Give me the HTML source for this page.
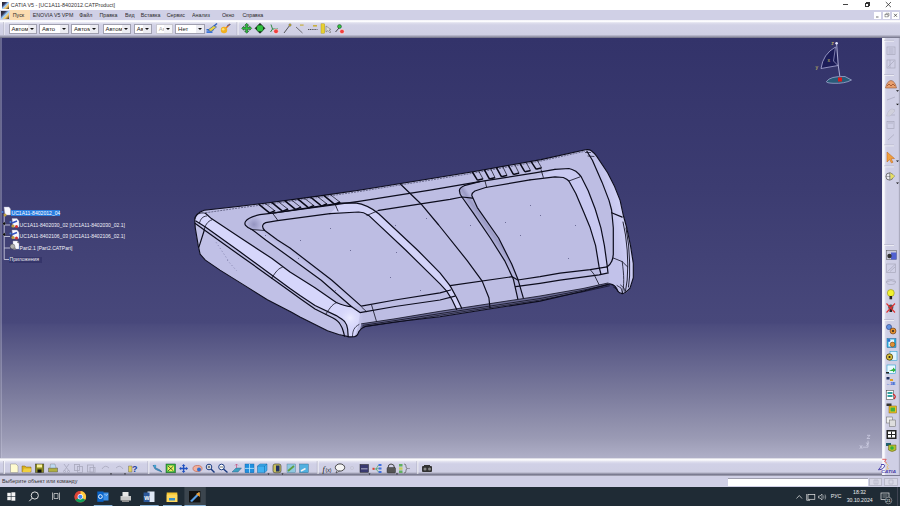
<!DOCTYPE html>
<html><head><meta charset="utf-8">
<style>
*{margin:0;padding:0;box-sizing:border-box}
html,body{width:900px;height:506px;overflow:hidden;background:#fff;font-family:"Liberation Sans",sans-serif;}
.a{position:absolute}
#title{left:0;top:0;width:900px;height:10px;background:#fff}
#menu{left:0;top:10px;width:900px;height:9.5px;background:#d0d0e6}
#tb{left:0;top:19.5px;width:900px;height:18px;background:linear-gradient(#f4f4f8 0,#fcfcfe 1.5px,#e0e0ee 2.8px,#d2d2e6 5px,#cfcfe4 14.5px,#a8a8bc 16px,#84849a 17.3px,#6a6a80 18px)}
#vp{left:0;top:37.5px;width:882px;height:420.5px;background:linear-gradient(#33336a 0px,#3c3c71 150px,#48487b 285px,#4c4c7e 287px,#7a7a9c 355px,#9a9ab4 400px,#b0b0c8 420.5px)}
#rtb{left:882px;top:37.5px;width:18px;height:438px;background:linear-gradient(90deg,#e8e8f2 0,#fcfcfe 1px,#f4f4fa 2.3px,#d8d8ea 3.5px,#cfcfe5 5px,#cfcfe5 16.3px,#b4b4c8 17.2px,#9c9cb0 18px);border-bottom:1px solid #7a7a90}
#btb{left:0;top:458px;width:882px;height:17.5px;background:linear-gradient(#c0c0d0 0,#fcfcfe 1px,#fafafc 2px,#dedeee 3.8px,#d0d0e6 6px,#cfcfe4 14px,#9c9cb0 15.5px,#727288 16.8px,#9a9aac 17.5px)}
#status{left:0;top:475.5px;width:900px;height:11.5px;background:#d0d0e6}
#task{left:0;top:487px;width:900px;height:19px;background:#1f2b35}
.t{position:absolute;white-space:nowrap;line-height:1;color:#222}
.combo{position:absolute;top:23.5px;height:10.5px;background:#fff;border:1px solid #a0a0b0;}
.combo span{position:absolute;left:1.8px;top:1.6px;font-size:6px;color:#222;line-height:1}
.combo i{position:absolute;right:0;top:0;width:8px;height:8.5px;background:#ececf2;}
.combo i:after{content:"";position:absolute;left:2px;top:3.5px;border-left:2px solid transparent;border-right:2px solid transparent;border-top:2.2px solid #111}
.mt{position:absolute;top:12.4px;font-size:5.3px;transform:scaleY(1.18);transform-origin:0 0;color:#2a2a2a;line-height:1;white-space:nowrap}
svg{position:absolute;left:0;top:0;overflow:visible}
</style></head><body>
<div id="title" class="a"></div>
<div id="menu" class="a"></div>
<div id="tb" class="a"></div>
<div id="vp" class="a"></div>
<div id="rtb" class="a"></div>
<div id="btb" class="a"></div>
<div id="status" class="a"></div>
<div id="task" class="a"></div>
<div class="a" style="left:0;top:37.5px;width:1px;height:420.5px;background:#9090a8;opacity:0.55"></div>
<div class="a" style="left:1px;top:37.5px;width:0.6px;height:420.5px;background:#c8c8dc;opacity:0.35"></div>
<svg width="900" height="40"><line x1="3.5" y1="22" x2="3.5" y2="35" stroke="#aaaabc" stroke-width="0.7"/><line x1="4.2" y1="22" x2="4.2" y2="35" stroke="#fff" stroke-width="0.6"/></svg>
<!-- HOOD -->
<svg width="900" height="506">
<defs>
<linearGradient id="gband" gradientUnits="userSpaceOnUse" x1="220" y1="250" x2="210" y2="265"><stop offset="0" stop-color="#d6d6fb"/><stop offset="1" stop-color="#c6c6ee"/></linearGradient>
<radialGradient id="gcorner" cx="350" cy="318" r="14" gradientUnits="userSpaceOnUse"><stop offset="0" stop-color="#ececff"/><stop offset="1" stop-color="#d0d0f6" stop-opacity="0"/></radialGradient>
<linearGradient id="gsh1" gradientUnits="userSpaceOnUse" x1="290" y1="257.5" x2="295.5" y2="250"><stop offset="0" stop-color="#c6c6ec"/><stop offset="0.5" stop-color="#bdbde5"/><stop offset="1" stop-color="#b0b0da"/></linearGradient>
<linearGradient id="gsh2" gradientUnits="userSpaceOnUse" x1="490" y1="238" x2="497" y2="233.2"><stop offset="0" stop-color="#b4b4dc"/><stop offset="0.55" stop-color="#9a9ac4"/><stop offset="1" stop-color="#b8b8e0"/></linearGradient>
<linearGradient id="gredge" gradientUnits="userSpaceOnUse" x1="612" y1="235" x2="632" y2="231"><stop offset="0" stop-color="#c2c2ea"/><stop offset="0.7" stop-color="#d0d0f6"/><stop offset="1" stop-color="#bcbce4"/></linearGradient>
</defs>
<path d="M194.7,219.8 C195,215.5 197.5,212.5 204.2,210.3 L240,206.2 L265,203.2 L320,195.9 L359,190.2 L430,178.8 L473,171.8 L541,159.6 L585.5,149.8 C588,149.5 590,149.8 591,150.5 C593,152 595,154 596.6,156.1 L607.6,172.7 L614.6,186.6 L620.1,200.4 L623.2,215 L626.8,228 L630.5,245.6 L633.3,263.3 L633.3,277.6 L630,288.2 C627,291.5 625,293.8 622.2,293.6 C620,293.2 618.6,292.5 617.8,291.3 L615.1,286.4 C613,284.6 611.5,284 609.8,283.8 L583,291.2 L540,301.1 L440,316.7 L395,322 L365.3,326.4 C361,328 359.8,330 358.9,331.5 C357.8,335 356.5,336.4 354.5,336.6 L349.4,336.9 L338.7,334.5 L327.5,330.7 L300,316.9 L291.1,312.1 L267.4,299.7 L243.7,284.9 L220,270.1 L205.4,260.1 L200.1,254.2 L198.3,245.9 L195.3,228.1 Z" fill="#bdbde3"/>
<!-- side face -->
<path d="M195.3,223.4 L240,255.4 L290,291.2 L300,298.5 L315,309 L333,318 C336.5,320 339,322 340,324 C342,327 343,330 343.5,332 L344.5,336.2 L338.7,334.5 L327.5,330.7 L300,316.9 L291.1,312.1 L267.4,299.7 L243.7,284.9 L220,270.1 L205.4,260.1 L200.1,254.2 L198.3,245.9 L195.3,228.1 Z" fill="#c0c0e6"/>
<!-- band L1-L2 -->
<path d="M205.4,213.3 L211.4,218.6 L240,237.6 L272,258.5 L290,272 L315,287.7 L336.3,302.5 C342,305 346,306.5 351.7,306.7 L360,312.6 C359,320 358,330 354.5,336.6 L348.2,336.6 L347.6,329 C347.5,327 346.5,324 344.6,321.5 C343,320 340,318 336.3,315.6 L315,305.5 L300,295.6 L290,288.6 L240,251.8 L205.4,226.9 L195.9,221 C196,216 199,213 205.4,213.3 Z" fill="url(#gband)"/>
<path d="M336,303 L352,306.7 L362,313 L365,325 L359,332 L354.5,336.6 L347,336 L345,322 Z" fill="url(#gcorner)"/>
<!-- left recess left wall shadow -->
<path d="M251.9,229.5 L265.7,240 L290,257.5 L320.9,280 L351.7,306.7 L361.2,306.1 L331.6,280 L290,248 L277.5,240 L264.7,230.5 Z" fill="url(#gsh1)"/>
<radialGradient id="gcl" cx="254" cy="224.5" r="9" gradientUnits="userSpaceOnUse"><stop offset="0" stop-color="#9494c0"/><stop offset="1" stop-color="#c0c0e6"/></radialGradient><path d="M247,219 C243.5,222 244,226 251.9,229.5 L264.7,230.5 C261.5,227.5 262,224 265.7,222.6 L272.6,213.2 L259.8,214.7 Z" fill="url(#gcl)"/>
<!-- left recess right wall highlight -->
<path d="M340,203.1 L355.2,202.8 C364,204 372,208 378.7,213.7 L417.4,250 L440,272.8 L450,285.6 L456.7,297.8 L461.7,308.3 L456.7,309.4 L452.2,300 L446.7,291.1 L440,283.9 L405.6,250 L368.7,215.4 C365,213 362,212 358.6,212 L330,213.7 Z" fill="#d2d2f8"/>
<!-- right recess left wall shadow -->
<path d="M479.6,181.6 L464.2,185.7 C460.5,187.5 459,189 459.5,191 C459.5,193.5 460.5,195.5 461.9,197 L473.7,213.6 L490.3,238 L504.6,260.6 L513.3,278.9 L517.8,298.9 L523.3,297.8 L517.8,278.9 L511.7,264.1 L498.6,238 L477.3,207.6 L471.9,195.8 C471.5,194 472.5,192.5 474.9,191 L485.6,187.5 Z" fill="url(#gsh2)"/>
<!-- right recess right wall highlight -->
<path d="M555,169.3 L568.9,168.5 C571.5,169 573.5,170 575.8,171.3 C578,173 579.8,174.8 581.3,176.9 L588.2,190.7 L595.2,209 L600.9,227.8 L604.4,245.6 L607.1,265.1 L608,273.1 L600.9,274 L599.1,266.9 L595.6,245.6 L590.2,227.8 L584.1,213 L575.8,193.5 L568.9,181 C567.5,179.5 565.5,178.5 563.3,177.5 L555,176.9 L530,179.8 Z" fill="#c9c9f1"/>
<!-- right rolled edge -->
<path d="M586.9,151.2 L592.4,160.2 L602.1,182.4 L609,200.4 L611.6,210 L613.3,227.8 L613.3,254.4 C613,258 612.5,260 611.6,261.6 C610.5,264 609,266 607.1,266.9 L608,273.1 L609.8,283.8 C611.5,284 613,284.6 615.1,286.4 L617.8,291.3 C618.6,292.5 620,293.2 622.2,293.6 C625,293.8 627.5,291.5 630,288.2 L633.3,277.6 L633.3,263.3 L630.5,245.6 L626.8,228 L623.2,215 L620.1,200.4 L614.6,186.6 L607.6,172.7 L596.6,156.1 C595,154 593,152 591,150.5 Z" fill="url(#gredge)"/>
<!-- lip band -->
<path d="M359.5,331 L361.5,323.8 L395,318.8 L440,311.3 L540,296 L583,288.5 L608,283 L609.8,283.8 L583,291.2 L540,301.1 L440,316.7 L395,322 L365.3,326.4 Z" fill="#6a6a94"/>
<g fill="none" stroke="#0c0c1c" stroke-width="1.2" stroke-linejoin="round" stroke-linecap="round">
<path d="M194.7,219.8 C195,215.5 197.5,212.5 204.2,210.3 L240,206.2 L265,203.2 L320,195.9 L359,190.2 L430,178.8 L473,171.8 L541,159.6 L585.5,149.8 C588,149.5 590,149.8 591,150.5 C593,152 595,154 596.6,156.1 L607.6,172.7 L614.6,186.6 L620.1,200.4 L623.2,215 L626.8,228 L630.5,245.6 L633.3,263.3 L633.3,277.6 L630,288.2 C627,291.5 625,293.8 622.2,293.6 C620,293.2 618.6,292.5 617.8,291.3 L615.1,286.4 C613,284.6 611.5,284 609.8,283.8 L583,291.2 L540,301.1 L440,316.7 L395,322 L365.3,326.4 C361,328 359.8,330 358.9,331.5 C357.8,335 356.5,336.4 354.5,336.6 L349.4,336.9 L338.7,334.5 L327.5,330.7 L300,316.9 L291.1,312.1 L267.4,299.7 L243.7,284.9 L220,270.1 L205.4,260.1 L200.1,254.2 L198.3,245.9 L195.3,228.1 Z" stroke-width="1.1"/>
<path d="M205.4,213.3 L211.4,218.6 L240,237.6 L272,258.5 L290,272 L315,287.7 L336.3,302.5 C342,305 346,306.5 351.7,306.7"/><path d="M195.9,221 L205.4,226.9 L240,251.8 L290,288.6 L300,295.6 L315,305.5 L336.3,315.6 C340,318 343,320 344.6,321.5 C346.5,324 347.5,327 347.6,329 L348.2,336.6"/><path d="M195.3,223.4 L240,255.4 L290,291.2 L300,298.5 L315,309 L333,318 C336.5,320 339,322 340,324 C342,327 343,330 343.5,332 L344.5,336.2"/>
<path d="M204.2,230.5 L198.9,247.1"/>
<path d="M194.9,218.5 C196,214 200,211.8 205.4,213.3" stroke-width="0.8"/>
<path d="M199.5,223 C200.5,219 202.5,216.3 206.5,216" stroke-width="0.8"/>
<path d="M204.2,230.5 C204.5,226 207.5,221 211.9,219.8" stroke-width="0.8"/>
<path d="M282.2,267.4 C279,268 276,271 271.5,278.6" stroke-width="0.8"/>
<path d="M336.9,302.5 C333,304 331,306 325.7,314.4" stroke-width="0.8"/>
<path d="M340,203.1 L272.6,213.2 L259.8,214.7 C252,216.5 248,218 245.5,221.5 C244,224 245,226.5 251.9,229.5 L265.7,240 L290,257.5 L320.9,280 L351.7,306.7 L360,312.6 L395,306.5 L440,300 L455,296.1"/><path d="M330,213.7 L277.5,220.6 L265.7,222.6 C262,224 261.5,227 264.7,230.5 L277.5,240 L290,248 L331.6,280 L361.2,306.1 L395,300 L440,292.8 L450.6,290"/>
<path d="M250.9,229.5 L264.7,230.5" stroke-width="0.8"/>
<path d="M272.6,213.2 L278,220.6" stroke-width="0.8"/>
<path d="M330,213.7 L358.6,212 C362,212 365,213 368.7,215.4 L405.6,250 L440,283.9 L446.7,291.1 L452.2,300 L456.7,309.4"/><path d="M340,203.1 L355.2,202.8 C364,204 372,208 378.7,213.7 L417.4,250 L440,272.8 L450,285.6 L456.7,297.8 L461.7,308.3"/>
<path d="M367,215.4 L378.7,210.4" stroke-width="0.8"/>
<path d="M361.8,307.3 L366.7,311.8" stroke-width="0.8"/>
<path d="M371.6,305.1 L376.4,321.1" stroke-width="0.8"/>
<path d="M272.6,213.2 L359,201.4 L430,190.2 L479.6,181.6 L535,172.8 L555,169.3"/><path d="M378.7,210.4 L450,199.3 L461.9,197 L472.5,198.1"/><path d="M400.6,184.3 L420.8,203.7 L438.7,225 L467.2,260.6 L482.2,281.1 L488.9,297.8 L490,308"/>
<path d="M479.6,181.6 L464.2,185.7 C460.5,187.5 459,189 459.5,191 C459.5,193.5 460.5,195.5 461.9,197 L473.7,213.6 L490.3,238 L504.6,260.6 L513.3,278.9 L517.8,298.9"/><path d="M530,179.8 L485.6,187.5 L474.9,191 C472.5,192.5 471.5,194 471.9,195.8 L477.3,207.6 L498.6,238 L511.7,264.1 L517.8,278.9 L523.3,297.8"/>
<path d="M485,181 L486.7,187.5" stroke-width="0.8"/>
<path d="M555,169.3 L568.9,168.5 C571.5,169 573.5,170 575.8,171.3 C578,173 579.8,174.8 581.3,176.9 L588.2,190.7 L595.2,209 L600.9,227.8 L604.4,245.6 L607.1,265.1 L608,273.1"/><path d="M530,179.8 L555,176.9 L563.3,177.5 C565.5,178.5 567.5,179.5 568.9,181 L575.8,193.5 L584.1,213 L590.2,227.8 L595.6,245.6 L599.1,266.9 L600.9,274"/>
<path d="M568.9,181 L580,176.9" stroke-width="0.8"/>
<path d="M450,285.6 L512.2,276.7 L517.8,280 L540,276.7 L560,273.1 L590.2,269.6 L607.1,266.9"/><path d="M515.6,286.7 L540,283.3 L560,280.2 L599.1,274.9 L607.1,273.1"/>
<path d="M590.2,269.6 L593.8,274 L599.1,284.7" stroke-width="0.8"/>
<path d="M586.9,151.2 L592.4,160.2 L602.1,182.4 L609,200.4 L611.6,210 L613.3,227.8 L613.3,254.4 C613,258 612.5,260 611.6,261.6 C610.5,264 609,266 607.1,266.9"/><path d="M611.6,212.7 L622.2,217.1"/><path d="M613.3,258 L622.2,261.6 L627.6,266.9" stroke-width="0.8"/><path d="M622.2,261.6 C624,275 624.5,285 622.2,293.6" stroke-width="0.8"/>
<path d="M585.5,152.5 L590.5,152.5 M588,156 L594,156.5" stroke-width="0.7"/>
<path d="M361.5,323.8 L395,318.8 L440,311.3 L540,296 L583,288.5 L608,283" stroke-width="0.8"/><path d="M363,325.3 L395,320.6 L440,313.6 L540,298.5 L583,290.2 L609,284.6" stroke-width="0.8"/>
<path d="M623,222 L625.5,235 L627.2,250 L627.8,265 L627.2,280 L625.5,291" stroke-width="0.9"/>
<path d="M626,228 L628.6,245 L629.6,262 L629.6,276 L628.5,287" stroke-width="0.9"/>
<path d="M613.5,287 L617,289.5 L619.5,293 M617,285.5 L621,288 L622.5,293.2 M620.5,285 L624,288 L625.2,292.5" stroke-width="0.7"/>
<path d="M362.5,327 L395,322.3 L440,315.2 L540,300 L583,291.8 L609.5,285.8" stroke-width="0.7"/>
<path d="M352.5,336.5 C352.5,331 354,327 359,324.5" stroke-width="0.7"/>
<path d="M617.8,291.3 C617,287 615,285 611,284.6" stroke-width="0.7"/>
</g>
<g fill="#5a5a86"><rect x="265" y="235" width="0.9" height="0.9"/><rect x="300" y="240" width="0.9" height="0.9"/><rect x="330" y="228" width="0.9" height="0.9"/><rect x="298" y="258" width="0.9" height="0.9"/><rect x="350" y="250" width="0.9" height="0.9"/><rect x="396" y="252" width="0.9" height="0.9"/><rect x="335" y="290" width="0.9" height="0.9"/><rect x="390" y="277" width="0.9" height="0.9"/><rect x="426" y="218" width="0.9" height="0.9"/><rect x="395" y="225" width="0.9" height="0.9"/><rect x="470" y="225" width="0.9" height="0.9"/><rect x="530" y="205" width="0.9" height="0.9"/><rect x="540" y="215" width="0.9" height="0.9"/><rect x="575" y="225" width="0.9" height="0.9"/><rect x="520" y="235" width="0.9" height="0.9"/><rect x="568" y="258" width="0.9" height="0.9"/><rect x="505" y="222" width="0.9" height="0.9"/><rect x="420" y="290" width="0.9" height="0.9"/></g>
<path d="M205.4,212.8 L240,207.8 L265,204.6 L320,197.3 L359,191.6 L430,180.2 L473,173.2 L541,161 L585,151.3" fill="none" stroke="#303050" stroke-width="0.6" stroke-dasharray="2 1"/>
<path d="M216.1,242.3 L228,260.1 M227.1,260 L236.6,270.7" stroke="#5a5a88" stroke-width="0.5" stroke-dasharray="1.2 2.2" fill="none"/>
</svg>
<!-- VENTS -->
<svg width="900" height="506"><g stroke="#0a0a18" stroke-linejoin="round" stroke-linecap="round" fill="none">
<path d="M259.0,204.4 L268.2,211.8 Q269.0,212.9 270.5,212.6 L274.5,210.9" stroke-width="1.5"/>
<path d="M265.5,203.5 L275.0,210.9" stroke-width="0.7"/>
<path d="M272.0,202.7 L281.2,210.1 Q282.0,211.2 283.5,210.9 L287.5,209.2" stroke-width="1.5"/>
<path d="M278.5,201.8 L288.0,209.2" stroke-width="0.7"/>
<path d="M285.0,200.9 L294.2,208.3 Q295.0,209.4 296.5,209.1 L300.5,207.4" stroke-width="1.5"/>
<path d="M291.5,200.0 L301.0,207.4" stroke-width="0.7"/>
<path d="M298.0,199.2 L307.2,206.6 Q308.0,207.7 309.5,207.4 L313.5,205.7" stroke-width="1.5"/>
<path d="M304.5,198.3 L314.0,205.7" stroke-width="0.7"/>
<path d="M311.0,197.5 L320.2,204.9 Q321.0,206.0 322.5,205.7 L326.5,204.0" stroke-width="1.5"/>
<path d="M317.5,196.6 L327.0,204.0" stroke-width="0.7"/>
<path d="M324.0,195.7 L333.2,203.1 Q334.0,204.2 335.5,203.9 L339.5,202.2" stroke-width="1.5"/>
<path d="M330.5,194.8 L340.0,202.2" stroke-width="0.7"/>
<path d="M472.7,172.5 L476.8,179.2 Q477.2,180.2 478.4,180.0 L482.5,179.1" stroke-width="1.5"/>
<path d="M478.9,171.4 L482.8,178.5" stroke-width="0.7"/>
<path d="M484.7,170.3 L488.8,177.9 Q489.2,178.9 490.4,178.7 L494.5,177.8" stroke-width="1.5"/>
<path d="M490.9,169.2 L494.8,177.2" stroke-width="0.7"/>
<path d="M496.7,168.1 L500.8,175.6 Q501.2,176.6 502.4,176.4 L506.5,175.5" stroke-width="1.5"/>
<path d="M502.9,167.0 L506.8,174.9" stroke-width="0.7"/>
<path d="M508.7,166.0 L512.8,173.4 Q513.2,174.4 514.4,174.2 L518.5,173.3" stroke-width="1.5"/>
<path d="M514.9,164.9 L518.8,172.7" stroke-width="0.7"/>
<path d="M520.2,163.9 L524.3,170.8 Q524.7,171.8 525.9,171.6 L530.0,170.7" stroke-width="1.5"/>
<path d="M526.4,162.8 L530.3,170.1" stroke-width="0.7"/>
<path d="M531.3,161.9 L535.4,168.1 Q535.8,169.1 537.0,168.9 L541.1,168.0" stroke-width="1.5"/>
<path d="M537.5,160.8 L541.4,167.4" stroke-width="0.7"/>
<path d="M335,204 L338,211" stroke-width="0.8"/>
<path d="M541.1,169.8 L543.3,177.3" stroke-width="0.8"/>
</g></svg>



<!-- title bar -->
<div class="a" style="left:1.5px;top:1.5px;width:7px;height:7px;background:linear-gradient(135deg,#222 0,#335 30%,#9cf 50%,#fc6 70%,#222 100%)"></div>
<div class="t" style="left:10.8px;top:2.3px;font-size:5.4px;transform:scaleY(1.15);transform-origin:0 0;color:#333">CATIA V5 - [UC1A11-8402012.CATProduct]</div>
<div class="a" style="left:843px;top:4.3px;width:5px;height:0.8px;background:#444"></div>
<div class="a" style="left:864.5px;top:3.2px;width:4px;height:4px;border:0.8px solid #333"></div>
<div class="a" style="left:865.5px;top:2.2px;width:4px;height:4px;border-top:0.8px solid #333;border-right:0.8px solid #333"></div>
<svg width="900" height="20"><path d="M885.8 2 L891 7.2 M891 2 L885.8 7.2" stroke="#333" stroke-width="0.8"/></svg>

<!-- menu -->
<div class="a" style="left:1px;top:11px;width:8px;height:8px;background:linear-gradient(135deg,#222 0,#335 30%,#9cf 50%,#fc6 70%,#222 100%)"></div>
<div class="a" style="left:10px;top:10px;width:19.5px;height:9.5px;background:#fbdcb0"></div>
<div class="mt" style="left:12.8px">Пуск</div>
<div class="mt" style="left:32.7px">ENOVIA V5 VPM</div>
<div class="mt" style="left:79.3px">Файл</div>
<div class="mt" style="left:99.5px">Правка</div>
<div class="mt" style="left:125px">Вид</div>
<div class="mt" style="left:140.8px">Вставка</div>
<div class="mt" style="left:166.7px">Сервис</div>
<div class="mt" style="left:192px">Анализ</div>
<div class="mt" style="left:222px">Окно</div>
<div class="mt" style="left:242.5px">Справка</div>
<div class="a" style="left:874px;top:12px;width:7px;height:6.5px;background:#fff"></div>
<div class="a" style="left:883px;top:12px;width:7px;height:6.5px;background:#fff"></div>
<div class="a" style="left:892px;top:12px;width:7px;height:6.5px;background:#fff"></div>

<svg width="900" height="30">
<path d="M876 17 L878.5 17" stroke="#333" stroke-width="0.7"/>
<rect x="885" y="14.3" width="3" height="2.6" fill="none" stroke="#555" stroke-width="0.5"/><path d="M886 14.3 L886 13.3 L889 13.3 L889 16 L888 16" fill="none" stroke="#555" stroke-width="0.5"/>
<path d="M894 13.8 L897 16.8 M897 13.8 L894 16.8" stroke="#333" stroke-width="0.7"/>
</svg>
<!-- combos -->
<div class="combo" style="left:8.7px;width:28.6px"><span>Автомс</span><i></i></div>
<div class="combo" style="left:39.3px;width:29.4px"><span>Авто</span><i></i></div>
<div class="combo" style="left:71.3px;width:28px"><span>Автомс</span><i></i></div>
<div class="combo" style="left:102.7px;width:28.6px"><span>Автомс</span><i></i></div>
<div class="combo" style="left:134px;width:18px"><span>Авт</span><i></i></div>
<div class="combo" style="left:156px;width:17px;border-color:#c8c8d0"><span style="color:#aaa">Авт</span><i style="background:#f4f4f8"></i></div>
<div class="combo" style="left:175.3px;width:29.4px"><span>Нет</span><i></i></div>

<!-- top toolbar icons -->
<svg width="900" height="40">
<line x1="237" y1="22" x2="237" y2="35" stroke="#b0b0c4" stroke-width="0.8"/>
<line x1="238" y1="22" x2="238" y2="35" stroke="#fff" stroke-width="0.8"/>
<!-- brush -->
<rect x="206.5" y="29" width="7" height="1.6" fill="#2a6ad8"/><rect x="206.5" y="31.3" width="6" height="1.6" fill="#2a6ad8"/>
<path d="M208 30 L214 25.5 L216.5 27 L211 31.5 Z" fill="#e8d040" stroke="#2050b0" stroke-width="0.6"/>
<line x1="214" y1="26" x2="217" y2="23.5" stroke="#3060c0" stroke-width="1.5"/>
<!-- ball -->
<line x1="225" y1="29" x2="230" y2="24" stroke="#e07020" stroke-width="1.5"/><line x1="227" y1="25.5" x2="230.5" y2="24.5" stroke="#3060c0" stroke-width="0.8"/>
<circle cx="224" cy="30" r="3.2" fill="#f0b020"/><circle cx="223.2" cy="29.2" r="1.3" fill="#ffe070"/>
<!-- green 4-way -->
<g transform="translate(246.7,28.3)" fill="#30c040" stroke="#0a3010" stroke-width="0.5">
<path d="M0 -5 L2 -3 L1 -3 L1 -1 L3 -1 L3 -2 L5 0 L3 2 L3 1 L1 1 L1 3 L2 3 L0 5 L-2 3 L-1 3 L-1 1 L-3 1 L-3 2 L-5 0 L-3 -2 L-3 -1 L-1 -1 L-1 -3 L-2 -3 Z"/>
</g>
<g transform="translate(260,28.3)" stroke="#0a3010" stroke-width="0.5">
<circle r="3.6" fill="#30c040"/>
<path d="M0 -5 L1.5 -3.5 L-1.5 -3.5 Z M0 5 L1.5 3.5 L-1.5 3.5 Z M-5 0 L-3.5 1.5 L-3.5 -1.5 Z M5 0 L3.5 1.5 L3.5 -1.5 Z" fill="#111"/>
</g>
<!-- axis red -->
<path d="M271 24.5 L272.5 29 L278 29 M272.5 29 L270.5 32" stroke="#208030" stroke-width="0.9" fill="none"/>
<circle cx="276" cy="31.3" r="2.4" fill="#f04040" stroke="#fff" stroke-width="0.5"/>
<!-- pin -->
<line x1="284" y1="33" x2="290" y2="25" stroke="#333" stroke-width="0.8"/><circle cx="290" cy="25" r="1.2" fill="#d8c030" stroke="#444" stroke-width="0.4"/>
<!-- line -->
<line x1="296" y1="27" x2="302.5" y2="33" stroke="#444" stroke-width="0.7"/><rect x="300" y="24.5" width="3.6" height="1.2" fill="#c8b040"/>
<!-- dim -->
<line x1="308" y1="29.5" x2="317.5" y2="29.5" stroke="#333" stroke-width="0.8" stroke-dasharray="1.2 0.6"/><rect x="313" y="25" width="4" height="1.6" fill="#c8b040"/>
<!-- yellow bar -->
<rect x="321" y="23.8" width="3.8" height="9.4" fill="#e8d030" stroke="#a09020" stroke-width="0.4"/><path d="M326 26 L326 32 L328 30.5 L330 33 L331 32 L329 30 L331 29.5 Z" fill="#ddd" stroke="#444" stroke-width="0.4"/>
<!-- green pin red -->
<line x1="335.5" y1="32" x2="339" y2="28" stroke="#222" stroke-width="0.8"/><circle cx="339.5" cy="26.5" r="2" fill="#30c040" stroke="#222" stroke-width="0.4"/>
<circle cx="342" cy="31.5" r="2.3" fill="#f04040" stroke="#fff" stroke-width="0.5"/>
</svg>

<!-- bottom toolbar icons -->
<svg width="900" height="506">
<g stroke-width="0.8">
<line x1="3.5" y1="461" x2="3.5" y2="474" stroke="#aaaabc"/><line x1="4.3" y1="461" x2="4.3" y2="474" stroke="#fff"/>
<line x1="148" y1="461" x2="148" y2="474" stroke="#aaaabc"/><line x1="148.8" y1="461" x2="148.8" y2="474" stroke="#fff"/>
<line x1="317.3" y1="461" x2="317.3" y2="474" stroke="#aaaabc"/><line x1="318.1" y1="461" x2="318.1" y2="474" stroke="#fff"/>
<line x1="417" y1="461" x2="417" y2="474" stroke="#aaaabc"/><line x1="417.8" y1="461" x2="417.8" y2="474" stroke="#fff"/>
</g>
<!-- new -->
<path d="M10.5 464 L16 464 L18 466 L18 472.5 L10.5 472.5 Z" fill="#fffbd0" stroke="#888" stroke-width="0.5"/>
<!-- open -->
<path d="M22 466 L25 466 L26 467 L31 467 L31 472 L22 472 Z" fill="#d8b020" stroke="#806010" stroke-width="0.5"/>
<path d="M22.5 472 L24 468.5 L31.5 468.5 L30.5 472 Z" fill="#f0d040"/>
<!-- save -->
<rect x="35.3" y="464" width="8.5" height="8.5" fill="#8a8a20" stroke="#333" stroke-width="0.5"/><rect x="37" y="464.5" width="5" height="3" fill="#f8f0a0"/><rect x="37.5" y="469.5" width="4" height="3" fill="#111"/>
<!-- print -->
<path d="M48.5 468 L57.5 468 L57.5 472 L48.5 472 Z" fill="#b0b040" stroke="#555" stroke-width="0.5"/><path d="M50.5 464 L55 464 L56 468 L50 468 Z" fill="#bcd8f0" stroke="#777" stroke-width="0.4"/>
<!-- greys -->
<g stroke="#a8a8bc" stroke-width="0.8" fill="none">
<path d="M64 464 L69 471 M69 464 L64 471"/><circle cx="64.5" cy="471.5" r="1"/><circle cx="68.5" cy="471.5" r="1"/>
<rect x="74.5" y="464.5" width="5" height="6"/><rect x="77.5" y="466.5" width="5" height="6"/>
<rect x="87.5" y="465" width="6" height="7"/><rect x="90" y="467.5" width="5" height="5"/>
<path d="M102 469 Q105 464 109 468"/><path d="M116 468 Q120 464 123 469"/>
</g>
<path d="M110 473.5 L112 473.5 L111 474.8 Z M124 473.5 L126 473.5 L125 474.8 Z" fill="#111"/>
<!-- help -->
<path d="M128.5 466 L132 466 L132 472 L128.5 472 Z" fill="#e0d060" stroke="#555" stroke-width="0.4"/>
<text x="132" y="472" font-size="9" font-weight="bold" fill="#2040a0" font-family="Liberation Sans">?</text>
<!-- fly -->
<path d="M153 465 L156 468 L160 470 L162 472 L158 470.5 L155 469 Z" fill="#40a0d0" stroke="#205080" stroke-width="0.5"/><circle cx="155" cy="466" r="1.3" fill="#40a0d0"/>
<!-- fit all -->
<rect x="166" y="464" width="9.5" height="8.8" fill="#30b040" stroke="#1a5020" stroke-width="0.5"/><rect x="167.5" y="465.5" width="6.5" height="5.8" fill="#f0f060"/>
<path d="M168 466 L173.5 471 M173.5 466 L168 471" stroke="#1a5020" stroke-width="0.8"/>
<!-- pan -->
<g transform="translate(183.6,468.5)" fill="#2050c0"><path d="M0 -4.5 L1.8 -2.5 L0.7 -2.5 L0.7 -0.7 L2.5 -0.7 L2.5 -1.8 L4.5 0 L2.5 1.8 L2.5 0.7 L0.7 0.7 L0.7 2.5 L1.8 2.5 L0 4.5 L-1.8 2.5 L-0.7 2.5 L-0.7 0.7 L-2.5 0.7 L-2.5 1.8 L-4.5 0 L-2.5 -1.8 L-2.5 -0.7 L-0.7 -0.7 L-0.7 -2.5 L-1.8 -2.5 Z"/></g>
<!-- rotate -->
<ellipse cx="197.5" cy="468.5" rx="4.5" ry="3" fill="#f0b0a0" stroke="#c05030" stroke-width="0.6"/><circle cx="199" cy="469.5" r="2" fill="#3070d0"/>
<!-- zoom in / out -->
<circle cx="209" cy="467" r="2.8" fill="#fff" stroke="#1a3a80" stroke-width="1"/><line x1="211" y1="469" x2="214.5" y2="472.5" stroke="#1a3a80" stroke-width="1.4"/><path d="M207.5 467 L210.5 467 M209 465.5 L209 468.5" stroke="#111" stroke-width="0.6"/>
<circle cx="221.5" cy="467" r="2.8" fill="#fff" stroke="#1a3a80" stroke-width="1"/><line x1="223.5" y1="469" x2="227.5" y2="472.5" stroke="#1a3a80" stroke-width="1.4"/><path d="M220 467 L223 467" stroke="#111" stroke-width="0.6"/>
<!-- normal view -->
<path d="M232 472 L236 468 L241.5 468 L238 472 Z" fill="#40a0c0" stroke="#205080" stroke-width="0.4"/><path d="M236.5 468 L236.5 464 L235 465.5 M236.5 464 L238 465.5" stroke="#c05080" stroke-width="0.7" fill="none"/>
<!-- multiview -->
<rect x="245" y="464" width="9" height="8.8" fill="#2090e0" stroke="#1060a0" stroke-width="0.4"/><path d="M249.5 464 L249.5 472.8 M245 468.4 L254 468.4" stroke="#bfe8ff" stroke-width="0.8"/>
<!-- cube -->
<path d="M257.5 466 L260 464 L267 464 L267 470.5 L264.5 472.8 L257.5 472.8 Z" fill="#40b0f0" stroke="#1060a0" stroke-width="0.5"/><path d="M257.5 466 L264.5 466 L267 464 M264.5 466 L264.5 472.8" stroke="#1060a0" stroke-width="0.5" fill="none"/>
<path d="M267.5 473.5 L269.5 473.5 L268.5 474.8 Z M281.5 473.5 L283.5 473.5 L282.5 474.8 Z" fill="#111"/>
<!-- render style -->
<rect x="273" y="464" width="8" height="8.8" rx="2" fill="#c8c060" stroke="#333" stroke-width="0.6"/><rect x="276" y="465.5" width="3.5" height="6" fill="#203060"/>
<!-- hide show -->
<rect x="287" y="464" width="8.5" height="8.8" fill="#90c8e0" stroke="#507090" stroke-width="0.4"/><path d="M288 471 L294 466" stroke="#60a040" stroke-width="1.8"/>
<rect x="299.6" y="464" width="8.8" height="8.8" fill="#50b0e0" stroke="#306080" stroke-width="0.4"/><path d="M301 471 L305.5 468.5" stroke="#f0f0f0" stroke-width="1.5"/>
<!-- f(x) -->
<text x="322.5" y="472" font-size="8.2" fill="#111" font-family="Liberation Serif" font-style="italic">f</text><text x="325.5" y="471.8" font-size="5.2" fill="#111" font-family="Liberation Sans">(x)</text>
<!-- bubble -->
<ellipse cx="340" cy="467.5" rx="4.7" ry="3.6" fill="#f4f4f4" stroke="#222" stroke-width="0.8"/><path d="M337 470.5 L336 473 L339.5 471" fill="#f4f4f4" stroke="#222" stroke-width="0.6"/>
<circle cx="352" cy="468" r="1.6" fill="none" stroke="#c0c0cc" stroke-width="0.6"/>
<!-- dark screen -->
<rect x="360" y="464.5" width="8.5" height="7.8" fill="#3a3a70" stroke="#222" stroke-width="0.5"/><rect x="361" y="468" width="6.5" height="1.5" fill="#8888aa"/>
<path d="M368.5 473.5 L370.5 473.5 L369.5 474.8 Z M396 473.5 L398 473.5 L397 474.8 Z" fill="#111"/>
<!-- tree -->
<g fill="#4070e0"><rect x="378.5" y="464" width="3" height="2"/><rect x="378.5" y="467.5" width="3" height="2"/><rect x="378.5" y="471" width="3" height="2"/></g>
<path d="M373 469 L376 469 L378.5 465 M376 469 L378.5 468.5 M376 469 L378.5 472" stroke="#30a050" stroke-width="0.6" fill="none"/><rect x="372.5" y="467.8" width="2" height="2" fill="#e04030"/>
<!-- lock -->
<path d="M388 468 Q388 464 391 464 Q394.5 464 394.5 468" fill="none" stroke="#444" stroke-width="1"/><rect x="387" y="467.5" width="8.5" height="5.5" rx="1" fill="#555" stroke="#222" stroke-width="0.4"/>
<!-- green bars -->
<rect x="399" y="464" width="3.5" height="2.5" fill="#60b060"/><rect x="399" y="467.3" width="3.5" height="2.5" fill="#c8d060"/><rect x="399" y="470.5" width="3.5" height="2.5" fill="#60b060"/>
<path d="M404 464 Q406 464 406 466 L406 467.5 L407.5 468.5 L406 469.5 L406 471 Q406 473 404 473" fill="none" stroke="#444" stroke-width="0.6"/><circle cx="409" cy="468.5" r="0.5" fill="#444"/>
<!-- camera -->
<rect x="422" y="466" width="10" height="6" rx="1" fill="#333"/><rect x="424" y="465" width="6" height="1.5" fill="#333"/><circle cx="425" cy="469" r="1.5" fill="#888"/><circle cx="429.5" cy="469" r="1.5" fill="#888"/>
</svg>

<!-- status bar -->
<div class="t" style="left:2px;top:478.6px;font-size:5.3px;color:#333">Выберите объект или команду</div>
<div class="a" style="left:728px;top:477.5px;width:140px;height:8.5px;background:#fff;border-top:0.6px solid #a0a0b0"></div>
<div class="a" style="left:868.5px;top:477.5px;width:13px;height:8.5px;background:#d8d8e6;border:0.5px solid #b8b8c8"></div>
<div class="a" style="left:884px;top:477.5px;width:13.5px;height:8.5px;background:#d8d8e6;border:0.5px solid #b8b8c8"></div>
<svg width="900" height="506">
<path d="M874 480 L878 480 L878 484 L874 484 Z M876 480 L876 484" stroke="#b0b0c0" stroke-width="0.6" fill="none"/>
<path d="M889 480 L893 480 L893 484 L889 484 Z" stroke="#b0b0c0" stroke-width="0.6" fill="none"/>
<!-- taskbar -->
<g fill="#f4f4f4"><rect x="7.3" y="492.8" width="3.5" height="3.4"/><rect x="11.4" y="492.3" width="3.9" height="3.9"/><rect x="7.3" y="496.8" width="3.5" height="3.4"/><rect x="11.4" y="496.8" width="3.9" height="3.9"/></g>
<circle cx="34.8" cy="495.5" r="3.6" fill="none" stroke="#f0f0f0" stroke-width="0.9"/><line x1="32.2" y1="498.2" x2="29.3" y2="501.2" stroke="#f0f0f0" stroke-width="1"/>
<path d="M52.5 492.5 L52.5 500 M54 493.5 L58 493.5 L58 498.5 L54 498.5 Z M59.5 492.5 L59.5 500" stroke="#e0e0e0" stroke-width="0.7" fill="none"/>
<!-- chrome -->
<circle cx="80.3" cy="496.8" r="5.8" fill="#db4437"/>
<path d="M80.3 496.8 L75.3 499.7 A5.8 5.8 0 0 0 85.3 499.7 Z" fill="#0f9d58"/>
<path d="M80.3 496.8 L85.3 499.7 A5.8 5.8 0 0 0 80.3 491 Z" fill="#ffcd40"/>
<path d="M80.3 496.8 L80.3 491 A5.8 5.8 0 0 0 75.3 499.7 Z" fill="#db4437"/>
<circle cx="80.3" cy="496.8" r="2.7" fill="#fff"/><circle cx="80.3" cy="496.8" r="2.1" fill="#4285f4"/>
<!-- outlook -->
<rect x="101" y="492.5" width="7.5" height="8" fill="#3a8ee6"/><rect x="97.3" y="491.5" width="6.2" height="10.3" fill="#0a64c8"/><circle cx="100.4" cy="496.6" r="1.9" fill="none" stroke="#fff" stroke-width="0.9"/><path d="M104.5 494 L106 495.5 L108 494" stroke="#fff" stroke-width="0.5" fill="none"/>
<!-- printer -->
<rect x="120.5" y="496" width="10.5" height="4.5" fill="#c8c8c8"/><rect x="122.5" y="492" width="6" height="4.5" fill="#e8e8e8"/><rect x="122" y="500" width="7" height="2" fill="#909090"/>
<!-- word -->
<rect x="147.5" y="491.5" width="7" height="10.5" fill="#dfe8f6"/><rect x="143.6" y="492.5" width="6" height="9.5" fill="#2b579a"/><text x="144.2" y="499.7" font-size="5.5" fill="#fff" font-weight="bold" font-family="Liberation Sans">W</text>
<!-- explorer -->
<rect x="166.7" y="492.5" width="10.6" height="9.5" fill="#f4c430"/><rect x="166.7" y="494.5" width="10.6" height="7.5" fill="#ffd85c"/><rect x="169" y="498" width="6" height="2.5" fill="#3a8fc8"/>
<!-- catia active -->
<rect x="184.4" y="487" width="21.4" height="19" fill="#3b454e"/>
<rect x="189" y="491" width="11.4" height="11.4" fill="#111"/>
<path d="M190 501 L199 492 L200 494 L192 502 Z" fill="#5aa0e8"/><path d="M196 494 L199.5 492 L200 497 Z" fill="#f0a030"/>
<g fill="#8ab4d8"><rect x="93.8" y="505" width="18.6" height="1"/><rect x="140" y="505" width="18.7" height="1"/><rect x="163" y="505" width="18.8" height="1"/><rect x="184.4" y="505" width="21.4" height="1"/></g>
<!-- tray -->
<path d="M796.5 498.5 L799.3 495.5 L802 498.5" stroke="#e8e8e8" stroke-width="0.7" fill="none"/>
<rect x="808" y="494.5" width="6.8" height="4.8" fill="none" stroke="#e8e8e8" stroke-width="0.7"/><path d="M806.7 494 L806.7 500.3 L810 500.3" stroke="#e8e8e8" stroke-width="0.7" fill="none"/>
<path d="M818.5 496 L820 496 L822 494 L822 500 L820 498 L818.5 498 Z" fill="none" stroke="#e8e8e8" stroke-width="0.6"/><path d="M823.5 495.5 Q824.5 497 823.5 498.5 M825 494.5 Q826.5 497 825 499.5" stroke="#e8e8e8" stroke-width="0.5" fill="none"/>
<rect x="881" y="493" width="8" height="6.5" fill="none" stroke="#e8e8e8" stroke-width="0.7"/><path d="M882.5 495 L887.5 495 M882.5 497 L887.5 497" stroke="#e8e8e8" stroke-width="0.5"/>
<circle cx="888.5" cy="500.5" r="3.3" fill="#1f2a33" stroke="#ccc" stroke-width="0.5"/>
<line x1="897.5" y1="487" x2="897.5" y2="506" stroke="#556" stroke-width="0.6"/>
</svg>
<div class="t" style="left:830.7px;top:494.2px;font-size:5.4px;color:#eee">РУС</div>
<div class="t" style="left:853px;top:490px;font-size:5.2px;color:#eee">18:32</div>
<div class="t" style="left:846.7px;top:498.2px;font-size:5.2px;color:#eee">30.10.2024</div>
<div class="t" style="left:886px;top:498.5px;font-size:4.2px;color:#eee">21</div>

<svg width="900" height="506">
<!-- CATIA logo -->
<path d="M882.3,459.3 L886.2,459.3 L884.6,461.6 L886.5,462.5" fill="none" stroke="#e05050" stroke-width="0.9"/>
<path d="M886,463 L888.3,465.5 L886.8,467.2 L888.6,468.5 L885.8,469.5" fill="none" stroke="#e8c070" stroke-width="0.9"/>
<path d="M881,464.5 L884,464.5 Q885.5,465.5 883.5,468 Q882,469.8 878.4,469.8 Q880.5,467.5 881.5,465.5" fill="none" stroke="#5048b0" stroke-width="1"/>
<text x="881.2" y="472.8" font-size="3.4" font-weight="bold" font-style="italic" fill="#4a3ca8" font-family="Liberation Sans" textLength="14.8" lengthAdjust="spacingAndGlyphs">CATIA</text>
<!-- viewport small axis -->
<g stroke="#dcdcf0" stroke-width="0.6" fill="none">
<path d="M862.5,447.2 L868,447.2 L868,440.5"/>
<path d="M859.8,445.2 L862.2,448.8 M862.2,445.2 L859.8,448.8"/>
<path d="M866.3,442.5 L867.5,444.3 M868.7,442.5 L866.5,446"/>
<path d="M867,435.3 L870,435.3 L867,438.5 L870,438.5"/>
</g>
</svg>
<svg width="900" height="506">
<line x1="884" y1="40.4" x2="894" y2="40.4" stroke="#b0b0c4" stroke-width="0.7"/><line x1="884" y1="41.199999999999996" x2="894" y2="41.199999999999996" stroke="#fff" stroke-width="0.6"/>
<line x1="884" y1="74.7" x2="894" y2="74.7" stroke="#b0b0c4" stroke-width="0.7"/><line x1="884" y1="75.5" x2="894" y2="75.5" stroke="#fff" stroke-width="0.6"/>
<line x1="884" y1="145" x2="894" y2="145" stroke="#b0b0c4" stroke-width="0.7"/><line x1="884" y1="145.8" x2="894" y2="145.8" stroke="#fff" stroke-width="0.6"/>
<line x1="884" y1="166" x2="894" y2="166" stroke="#b0b0c4" stroke-width="0.7"/><line x1="884" y1="166.8" x2="894" y2="166.8" stroke="#fff" stroke-width="0.6"/>
<line x1="884" y1="244.7" x2="894" y2="244.7" stroke="#b0b0c4" stroke-width="0.7"/><line x1="884" y1="245.5" x2="894" y2="245.5" stroke="#fff" stroke-width="0.6"/>
<line x1="884" y1="319.7" x2="894" y2="319.7" stroke="#b0b0c4" stroke-width="0.7"/><line x1="884" y1="320.5" x2="894" y2="320.5" stroke="#fff" stroke-width="0.6"/>
<path d="M896 90.2 L899 90.2 L897.5 91.7 Z" fill="#111"/>
<path d="M896 103.80000000000001 L899 103.80000000000001 L897.5 105.30000000000001 Z" fill="#111"/>
<path d="M896 160.4 L899 160.4 L897.5 161.9 Z" fill="#111"/>
<path d="M896 182.4 L899 182.4 L897.5 183.9 Z" fill="#111"/>

<g stroke="#a8a8bc" stroke-width="0.7" fill="none">
<rect x="887" y="47" width="8" height="7.5"/><path d="M888.5 49 L893.5 49 M888.5 51 L893.5 51 M888.5 53 L893.5 53"/>
<rect x="887" y="60" width="8" height="8"/><path d="M888 67 L894 61 M890 60 L890 68"/>
<path d="M887 100 L895 97"/>
<path d="M888 116 Q890 109 895 110 M887 115 L895 115"/>
<rect x="887" y="121.5" width="7" height="7"/><path d="M888 123 L893 123"/>
<path d="M888 140 L894 134.5"/>
<rect x="886.5" y="264" width="9" height="8.5"/><path d="M887.5 271.5 L895 264.5 M890 271.5 L895 267"/>
<ellipse cx="891" cy="282" rx="4.5" ry="2.5"/><path d="M886.5 282 Q891 279 895.5 282"/>
</g>
<!-- orange mound -->
<path d="M885.5 88 Q887 81 891 80.5 Q895 81 896.5 88 Z" fill="#e8a070" stroke="#804020" stroke-width="0.5"/><path d="M887 86 L889 84 L891 86 L893 84 L895 86" stroke="#803010" stroke-width="0.6" fill="none"/>
<!-- grey hat icon -->
<path d="M886.5 116 Q889 108 893 109 L895 111 L890 116 Z" fill="#d0d0dc" stroke="#b8b8c8" stroke-width="0.5"/>
<!-- orange cursor -->
<path d="M887 152 L887 162 L889.5 159.5 L891.5 163 L893 162.2 L891 158.8 L894.5 158.5 Z" fill="#f0a040" stroke="#c06010" stroke-width="0.5"/>
<!-- sphere -->
<circle cx="889.5" cy="176.5" r="3.6" fill="#e8e8f0" stroke="#444" stroke-width="0.7"/><path d="M886 176.5 L893 176.5 M889.5 173 L889.5 180" stroke="#444" stroke-width="0.4"/><path d="M890 172.5 L895 176 L890.5 180 Z" fill="#e8e060" stroke="#777" stroke-width="0.4"/>
<!-- icon screen -->
<rect x="886.5" y="250.5" width="10" height="9" fill="#c8c8d8" stroke="#555" stroke-width="0.5"/><rect x="891" y="252.5" width="5.5" height="7" fill="#5060d0"/><circle cx="889.5" cy="256" r="2.2" fill="#333"/>
<!-- bulb -->
<circle cx="890.8" cy="293" r="3.5" fill="#f0f030" stroke="#808010" stroke-width="0.5"/><rect x="889.5" y="296" width="2.6" height="3.3" fill="#222"/>
<!-- red X -->
<circle cx="890.8" cy="307" r="2.6" fill="#555"/><rect x="889.5" y="309" width="2.6" height="3" fill="#222"/>
<path d="M886.5 303.5 L895 312.5 M895 303.5 L886.5 312.5" stroke="#e03030" stroke-width="1.1"/>
<!-- gears group -->
<circle cx="889" cy="327" r="2.6" fill="#6090e0" stroke="#203070" stroke-width="0.5"/><circle cx="893" cy="331" r="3" fill="#e09030" stroke="#603010" stroke-width="0.6"/><circle cx="893" cy="331" r="1" fill="#222"/>
<rect x="887" y="338.5" width="9" height="9" fill="#30b0e0" stroke="#1a5080" stroke-width="0.4"/><rect x="888.5" y="339.5" width="5.5" height="7" fill="#e8f8ff"/><circle cx="892.5" cy="344.5" r="2.4" fill="#e09030" stroke="#603010" stroke-width="0.5"/><circle cx="889" cy="340.5" r="1.4" fill="#3070d0"/>
<rect x="890" y="351.5" width="7" height="9" fill="#e0f4ff" stroke="#30a0d0" stroke-width="0.6"/><circle cx="889.5" cy="357" r="3.2" fill="#d8c040" stroke="#403000" stroke-width="0.7"/><circle cx="889.5" cy="357" r="1.1" fill="#222"/>
<rect x="887" y="365" width="8.5" height="8.5" fill="#e8f8ff" stroke="#30a0d0" stroke-width="0.6"/><path d="M889 371 L893 369 L893 367.5 L896 370 L893 372.5 L893 371 Z" fill="#30b040"/><rect x="886" y="372" width="3" height="1.5" fill="#222"/>
<rect x="886.5" y="377" width="3" height="2.5" fill="#203060"/><rect x="890" y="379" width="3" height="2" fill="#e0a020"/><text x="886" y="385" font-size="4.2" font-weight="bold" fill="#2050d0" font-family="Liberation Sans">←3E</text>
<rect x="886.5" y="390.5" width="7" height="9" fill="#fff" stroke="#333" stroke-width="0.5"/><rect x="887.5" y="392" width="5" height="2" fill="#30a0a0"/><rect x="887.5" y="395" width="5" height="2" fill="#30a0a0"/><path d="M893 394 Q897 396 894 399" stroke="#d02020" stroke-width="1.2" fill="none"/>
<rect x="886.5" y="403.5" width="5" height="2.5" fill="#333"/><rect x="889" y="406" width="7.5" height="7" fill="#f0c020" stroke="#806010" stroke-width="0.5"/><rect x="890.5" y="407.5" width="4.5" height="4" fill="#40b040"/>
<rect x="886.5" y="417" width="6" height="6" fill="#eee" stroke="#666" stroke-width="0.5"/><rect x="889.5" y="420" width="6" height="6.5" fill="#ddd" stroke="#666" stroke-width="0.5"/>
<rect x="886.5" y="430" width="10" height="9" fill="#222"/><rect x="888" y="431.5" width="7" height="6" fill="#fff"/><path d="M888 434.5 L895 434.5 M891.5 431.5 L891.5 437.5" stroke="#222" stroke-width="1"/>
<rect x="886" y="443" width="5" height="3" fill="#206070"/><path d="M888.5 445 L896 445 L896 450 Q892 453 888.5 450 Z" fill="#b0c030" stroke="#605010" stroke-width="0.5"/><circle cx="892" cy="448" r="1.8" fill="#30b040"/>
</svg>

<!-- compass -->
<svg width="900" height="506">
<path d="M821 68.5 Q823 54 835.5 47 L838 65.5 Z" fill="#1c1c58"/>
<path d="M821 68.5 Q823 54 835.5 47" fill="none" stroke="#c0c0e8" stroke-width="0.7"/>
<path d="M821 68.5 L838 65.5" stroke="#c0c0e8" stroke-width="0.7"/>
<path d="M835.5 47 L833.5 61 L838 65.5" fill="none" stroke="#c0c0e8" stroke-width="0.6"/>
<path d="M836.6 43.5 L838.3 66 L839.8 76" fill="none" stroke="#c8c8ec" stroke-width="0.8"/>
<path d="M826.5 81.5 Q830 76 845 76.5 L851.5 80 Q845 83.8 833 83.3 Q826 83 826.5 81.5 Z" fill="#2a5a78" stroke="#c8c8ec" stroke-width="0.6"/>
<rect x="838" y="77.5" width="4" height="4" fill="#e01818"/>
<circle cx="836.6" cy="43.2" r="1.3" fill="#e8e8ff"/>
<text x="831.3" y="45" font-size="5.2" fill="#d8c860" font-family="Liberation Sans">z</text>
<text x="815.5" y="69" font-size="5.2" fill="#d8c860" font-family="Liberation Sans">y</text>
<text x="827.5" y="62" font-size="5" fill="#d8c860" font-family="Liberation Sans">x</text>
</svg>
<!-- tree -->
<svg width="900" height="506">
<line x1="4.2" y1="216" x2="4.2" y2="259.5" stroke="#d8d8e8" stroke-width="0.8"/>
<path d="M4.2 236.5 L10 236.5 M4.2 225 L10 225 M4.2 248 L10 248 M4.2 259.5 L9 259.5" stroke="#d8d8e8" stroke-width="0.8"/>
<path d="M4.2 221.8 L6 223.6 L4.2 225.4 L2.4 223.6 Z M4.2 232.6 L6 234.4 L4.2 236.2 L2.4 234.4 Z" fill="#111" stroke="#ccc" stroke-width="0.3"/>
<!-- root icon -->
<path d="M4 207 L9 207 L10.5 209 L10.5 215 L5 215 Z" fill="#f8f8ff" stroke="#aab" stroke-width="0.4"/>
<circle cx="2.5" cy="212" r="1" fill="#4080e0"/><circle cx="5" cy="215" r="1.5" fill="#c0a040"/>
<!-- child icons -->
<g id="ci">
<path d="M12 218.6 L17 218.6 L19 221 L19 227 L13 227 Z" fill="#f8f8ff" stroke="#aab" stroke-width="0.4"/>
<path d="M12 223 L17 221" stroke="#3050c0" stroke-width="1.5"/>
<circle cx="10.5" cy="222" r="1" fill="#4080e0"/><circle cx="13" cy="226" r="1.6" fill="#c0a040"/><circle cx="16.5" cy="226.5" r="1.5" fill="#d03030"/>
</g>
<use href="#ci" y="11.5"/>
<g>
<path d="M13 241 L17.5 241 L19 243 L19 249 L13 249 Z" fill="#f8f8ff" stroke="#aab" stroke-width="0.4"/>
<circle cx="12.5" cy="246.5" r="2.4" fill="#b0b0b0" stroke="#444" stroke-width="0.4"/><circle cx="14.5" cy="248.5" r="1.3" fill="#888"/><path d="M17 242 L19 243" stroke="#222" stroke-width="0.6"/>
</g>
</svg>
<div class="a" style="left:11.3px;top:210.3px;width:48.7px;height:5.8px;background:#2a7de0"></div>
<div class="t" style="left:11.5px;top:210.6px;font-size:5.1px;color:#fff">UC1A11-8402012_04</div>
<div class="t" style="left:19.6px;top:222.5px;font-size:5.05px;color:#f0f0f8">UC1A11-8402030_02 [UC1A11-8402030_02.1]</div>
<div class="t" style="left:19.6px;top:233.8px;font-size:5.05px;color:#f0f0f8">UC1A11-8402106_03 [UC1A11-8402106_02.1]</div>
<div class="t" style="left:19.6px;top:245.5px;font-size:5.05px;color:#f0f0f8">Part2.1 [Part2.CATPart]</div>
<div class="a" style="left:9px;top:256.8px;width:33px;height:6px;background:#35356a"></div>
<div class="t" style="left:9.5px;top:257.2px;font-size:5.05px;color:#e8e8f0">Приложения</div>
</body></html>
